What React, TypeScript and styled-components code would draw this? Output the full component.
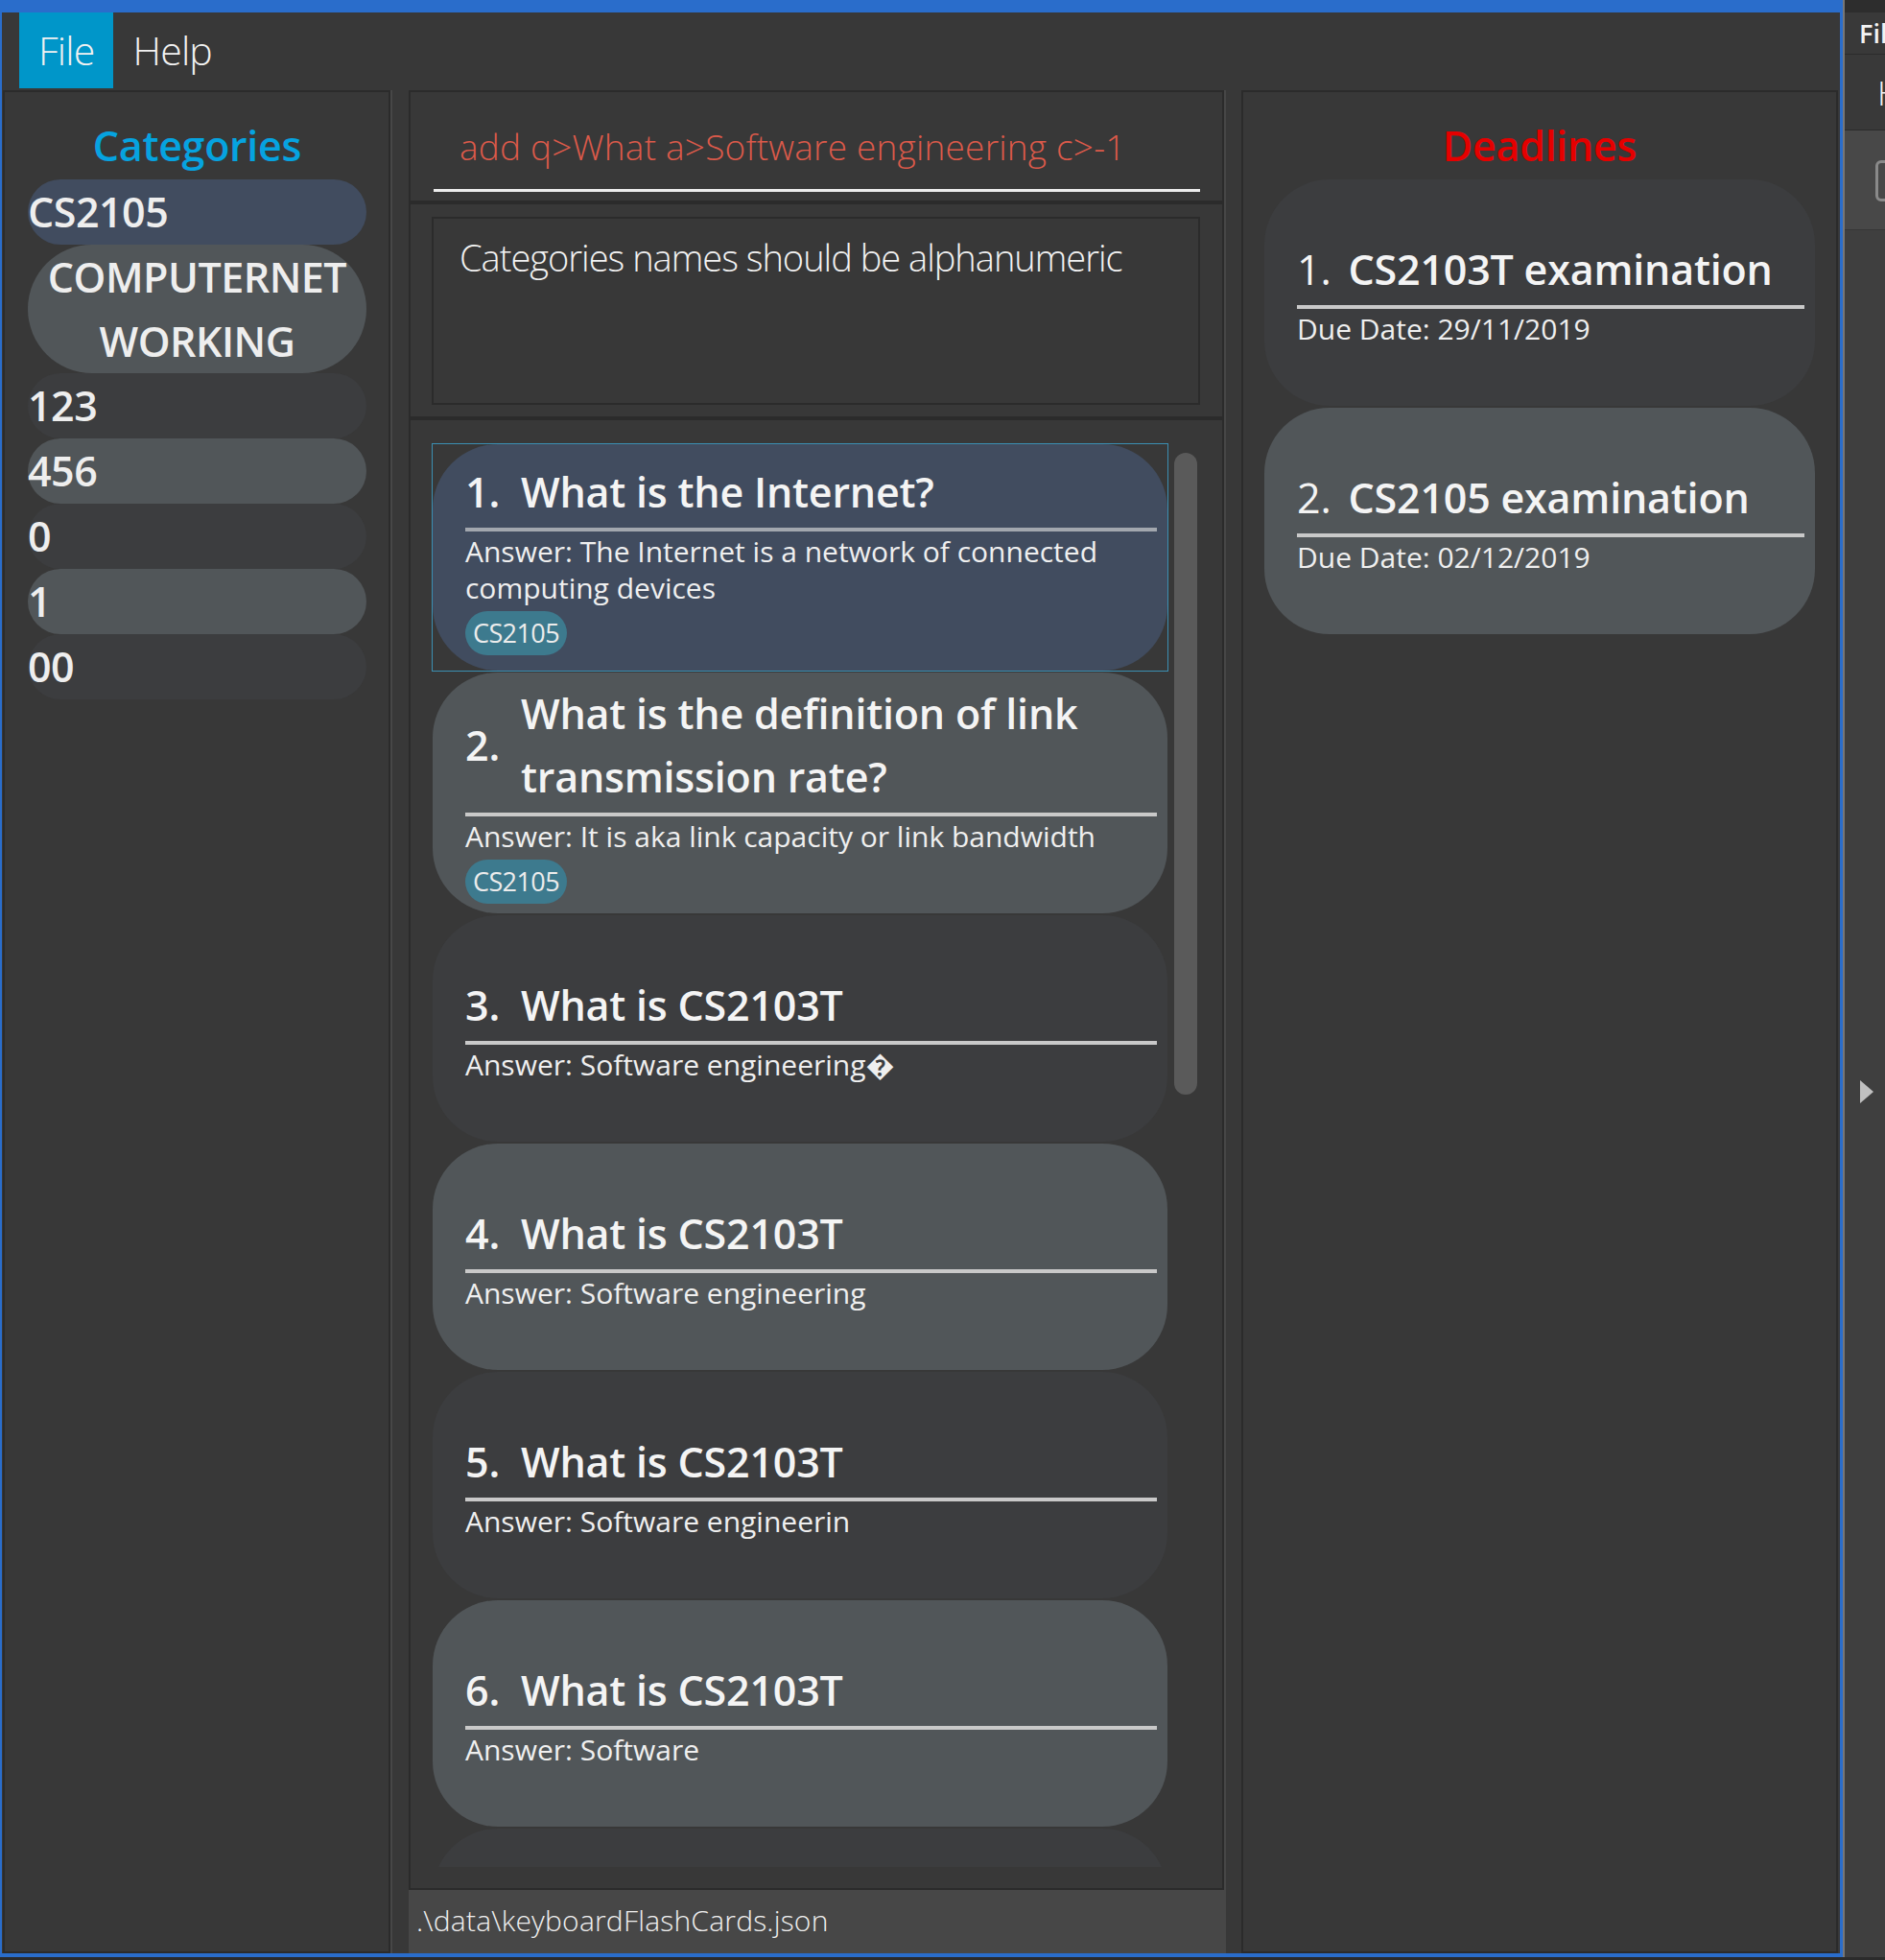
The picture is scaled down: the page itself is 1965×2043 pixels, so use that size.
import React from "react";
import styled, { createGlobalStyle } from "styled-components";

const GlobalStyle = createGlobalStyle`
  html, body { margin: 0; padding: 0; background: #2b2b2b; }
  body { font-family: "Open Sans", "Noto Sans", "DejaVu Sans", sans-serif; }
  * { box-sizing: border-box; }
`;

type Tone = "dark" | "light" | "selected";
const toneBg: Record<Tone, string> = {
  dark: "#3c3d3f",
  light: "#515659",
  selected: "#414c5f",
};

const Screen = styled.div`
  width: 1965px;
  height: 2043px;
  display: flex;
  align-items: flex-start;
  overflow: hidden;
  background: #2b2b2b;
`;

const Window = styled.div`
  width: 1921px;
  height: 2040px;
  flex: none;
  border-style: solid;
  border-color: #2a6dcb;
  border-width: 13px 3px 4px 2px;
  background: #383838;
  display: flex;
  flex-direction: column;
`;

const MenuBar = styled.div`
  height: 81px;
  flex: none;
  display: flex;
  align-items: flex-start;
  padding-left: 18px;
`;

const MenuItem = styled.div<{ $active?: boolean }>`
  height: 79px;
  line-height: 79px;
  padding: 0 20px;
  font-size: 41px;
  font-weight: 300;
  letter-spacing: -0.8px;
  color: #f2f2f2;
  background: ${(p) => (p.$active ? "#0096c9" : "transparent")};
`;

const Content = styled.div`
  flex: 1;
  min-height: 0;
  display: flex;
  padding-left: 1px;
`;

const Panel = styled.div`
  border: 2px solid #2b2b2b;
  background: #383838;
`;

const SidePanel = styled(Panel)<{ $width: number; $padL: number; $padR: number }>`
  width: ${(p) => p.$width}px;
  flex: none;
  display: flex;
  flex-direction: column;
  padding: 0 ${(p) => p.$padR}px 0 ${(p) => p.$padL}px;
`;

const Divider = styled.div<{ $width: number }>`
  width: ${(p) => p.$width}px;
  flex: none;
  border-left: 2px solid #474747;
`;

const Heading = styled.div<{ $color: string }>`
  margin-top: 26px;
  margin-bottom: 5px;
  height: 60px;
  line-height: 60px;
  text-align: center;
  font-size: 43px;
  font-weight: 600;
  letter-spacing: -0.3px;
  color: ${(p) => p.$color};
`;

const CategoryItem = styled.div<{ $tone: Tone; $centered?: boolean }>`
  min-height: 68px;
  line-height: 67px;
  border-radius: 999px;
  background: ${(p) => toneBg[p.$tone]};
  font-size: 43px;
  font-weight: 600;
  letter-spacing: -0.5px;
  color: #eeeeee;
  text-align: ${(p) => (p.$centered ? "center" : "left")};
  white-space: nowrap;
`;

const MiddleColumn = styled.div`
  width: 850px;
  flex: none;
  display: flex;
  flex-direction: column;
`;

const CommandPanel = styled(Panel)`
  height: 117px;
  flex: none;
  padding: 24px 23px 0 24px;
`;

const CommandField = styled.div`
  padding: 15px 0 26px 27px;
  border-bottom: 3px solid #ececec;
  font-size: 37px;
  line-height: 36px;
  font-weight: 300;
  letter-spacing: 0.2px;
  color: #dc5a4a;
  white-space: nowrap;
`;

const ResultPanel = styled(Panel)`
  height: 225px;
  flex: none;
  padding: 13px 23px 12px 22px;
`;

const ResultBox = styled.div`
  height: 100%;
  border: 2px solid #2b2b2b;
  padding: 21px 0 0 27px;
  font-size: 38px;
  line-height: 38px;
  font-weight: 300;
  letter-spacing: -1px;
  color: #f2f2f2;
`;

const ListPanel = styled(Panel)`
  flex: 1;
  min-height: 0;
  display: flex;
  padding: 24px 26px 22px 22px;
`;

const CellList = styled.div`
  width: 768px;
  flex: none;
  overflow: hidden;
  display: flex;
  flex-direction: column;
`;

const ScrollTrack = styled.div`
  width: 24px;
  margin-left: 6px;
  padding-top: 10px;
  flex: none;
`;

const Thumb = styled.div`
  height: 669px;
  border-radius: 12px;
  background: #5a5a5a;
`;

const Cell = styled.div<{ $selected?: boolean }>`
  flex: none;
  border: 1px solid ${(p) => (p.$selected ? "#3b8fb2" : "transparent")};
`;

const Card = styled.div<{ $tone: Tone }>`
  min-height: 236px;
  border-radius: 68px;
  background: ${(p) => toneBg[p.$tone]};
  padding: 10px 11px 10px 34px;
  display: flex;
  flex-direction: column;
  justify-content: center;
  color: #f2f2f2;
`;

const TitleRow = styled.div`
  display: flex;
  align-items: center;
  font-size: 43px;
  line-height: 66px;
  font-weight: 600;
  letter-spacing: -0.2px;
  color: #f4f4f4;
`;

const IndexLabel = styled.span<{ $light?: boolean }>`
  flex: none;
  margin-right: ${(p) => (p.$light ? 18 : 22)}px;
  font-weight: ${(p) => (p.$light ? 400 : 600)};
`;

const TitleText = styled.span`
  flex: 1;
  min-width: 0;
`;

const Rule = styled.div<{ $muted?: boolean }>`
  height: 4px;
  margin-top: 4px;
  background: ${(p) => (p.$muted ? "#a2a7ae" : "#c9c9c9")};
`;

const Detail = styled.div`
  margin-top: 2px;
  font-size: 30px;
  line-height: 38px;
  font-weight: 400;
  letter-spacing: 0;
  color: #efefef;
`;

const TagRow = styled.div`
  display: flex;
  margin-top: 5px;
`;

const Tag = styled.span`
  height: 46px;
  line-height: 46px;
  padding: 0 8px;
  border-radius: 23px;
  background: #3d7a8e;
  font-size: 27px;
  letter-spacing: -0.6px;
  color: #ececec;
`;

const StatusBar = styled.div`
  height: 66px;
  flex: none;
  background: #474747;
  padding-left: 8px;
  font-size: 30px;
  line-height: 64px;
  font-weight: 300;
  letter-spacing: 0.2px;
  color: #f0f0f0;
  white-space: nowrap;
`;

const DeadlineList = styled.div`
  display: flex;
  flex-direction: column;
  gap: 2px;
`;

/* partially visible neighbouring window */
const SideWindow = styled.div`
  flex: 1;
  height: 2040px;
  display: flex;
  flex-direction: column;
  border-left: 2px solid #777777;
  background: #404040;
  overflow: hidden;
  white-space: nowrap;
`;

const SideTitle = styled.div`
  height: 13px;
  flex: none;
  background: #2d2d2d;
`;

const SideMenu = styled.div<{ $height: number; $pad: number; $size: number; $weight: number }>`
  height: ${(p) => p.$height}px;
  flex: none;
  border-bottom: 1px solid #2b2b2b;
  background: #393939;
  padding-left: ${(p) => p.$pad}px;
  line-height: ${(p) => p.$height}px;
  font-size: ${(p) => p.$size}px;
  font-weight: ${(p) => p.$weight};
  color: #f2f2f2;
`;

const SideToolbar = styled.div`
  height: 104px;
  flex: none;
  background: #484848;
  border-bottom: 1px solid #363636;
  padding: 31px 0 0 32px;
`;

const SideButton = styled.div`
  width: 40px;
  height: 43px;
  border: 3px solid #8a8a8a;
  border-radius: 6px;
`;

const SideBody = styled.div`
  flex: 1;
  background: #3f3f3f;
  padding: 886px 0 0 16px;
`;

const Arrow = styled.div`
  width: 0;
  height: 0;
  border-left: 14px solid #c0c0c0;
  border-top: 12px solid transparent;
  border-bottom: 12px solid transparent;
`;

const categories: { lines: string[]; tone: Tone; centered?: boolean }[] = [
  { lines: ["CS2105"], tone: "selected" },
  { lines: ["COMPUTERNET", "WORKING"], tone: "light", centered: true },
  { lines: ["123"], tone: "dark" },
  { lines: ["456"], tone: "light" },
  { lines: ["0"], tone: "dark" },
  { lines: ["1"], tone: "light" },
  { lines: ["00"], tone: "dark" },
];

const questions: { q: string; a: string; tag?: string }[] = [
  { q: "What is the Internet?", a: "The Internet is a network of connected computing devices", tag: "CS2105" },
  { q: "What is the definition of link transmission rate?", a: "It is aka link capacity or link bandwidth", tag: "CS2105" },
  { q: "What is CS2103T", a: "Software engineering\uFFFD" },
  { q: "What is CS2103T", a: "Software engineering" },
  { q: "What is CS2103T", a: "Software engineerin" },
  { q: "What is CS2103T", a: "Software" },
];

const deadlines = [
  { title: "CS2103T examination", date: "29/11/2019" },
  { title: "CS2105 examination", date: "02/12/2019" },
];

export default function App() {
  return (
    <>
      <GlobalStyle />
      <Screen>
        <Window>
          <MenuBar>
            <MenuItem $active>File</MenuItem>
            <MenuItem>Help</MenuItem>
          </MenuBar>
          <Content>
            <SidePanel $width={404} $padL={24} $padR={23}>
              <Heading $color="#06a3e0">Categories</Heading>
              {categories.map((c, i) => (
                <CategoryItem key={i} $tone={c.tone} $centered={c.centered}>
                  {c.lines.map((l, j) => (
                    <React.Fragment key={j}>
                      {j > 0 && <br />}
                      {l}
                    </React.Fragment>
                  ))}
                </CategoryItem>
              ))}
            </SidePanel>
            <Divider $width={19} />
            <MiddleColumn>
              <CommandPanel>
                <CommandField>add q&gt;What a&gt;Software engineering c&gt;-1</CommandField>
              </CommandPanel>
              <ResultPanel>
                <ResultBox>Categories names should be alphanumeric</ResultBox>
              </ResultPanel>
              <ListPanel>
                <CellList>
                  {questions.map((item, i) => {
                    const tone: Tone = i === 0 ? "selected" : i % 2 === 1 ? "light" : "dark";
                    return (
                      <Cell key={i} $selected={i === 0}>
                        <Card $tone={tone}>
                          <TitleRow>
                            <IndexLabel>{i + 1}.</IndexLabel>
                            <TitleText>{item.q}</TitleText>
                          </TitleRow>
                          <Rule $muted={i === 0} />
                          <Detail>Answer: {item.a}</Detail>
                          {item.tag && (
                            <TagRow>
                              <Tag>{item.tag}</Tag>
                            </TagRow>
                          )}
                        </Card>
                      </Cell>
                    );
                  })}
                  {/* next card, scrolled mostly out of view */}
                  <Cell>
                    <Card $tone="dark" />
                  </Cell>
                </CellList>
                <ScrollTrack>
                  <Thumb />
                </ScrollTrack>
              </ListPanel>
              <StatusBar>.\data\keyboardFlashCards.json</StatusBar>
            </MiddleColumn>
            <Divider $width={18} />
            <SidePanel $width={622} $padL={22} $padR={22}>
              <Heading $color="#e50000">Deadlines</Heading>
              <DeadlineList>
                {deadlines.map((d, i) => (
                  <Card key={i} $tone={i % 2 === 0 ? "dark" : "light"}>
                    <TitleRow>
                      <IndexLabel $light>{i + 1}.</IndexLabel>
                      <TitleText>{d.title}</TitleText>
                    </TitleRow>
                    <Rule />
                    <Detail>Due Date: {d.date}</Detail>
                  </Card>
                ))}
              </DeadlineList>
            </SidePanel>
          </Content>
        </Window>
        <SideWindow>
          <SideTitle />
          <SideMenu $height={44} $pad={15} $size={27} $weight={600}>File</SideMenu>
          <SideMenu $height={79} $pad={34} $size={35} $weight={300}>Help</SideMenu>
          <SideToolbar>
            <SideButton />
          </SideToolbar>
          <SideBody>
            <Arrow />
          </SideBody>
        </SideWindow>
      </Screen>
    </>
  );
}
